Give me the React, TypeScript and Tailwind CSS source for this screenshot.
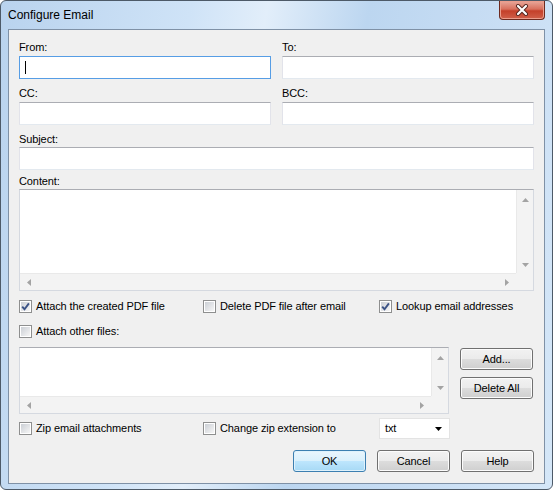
import React from 'react';

const Arrow: React.FC<{ dir: 'up' | 'down' | 'left' | 'right' }> = ({ dir }) => {
  const pts = {
    up: '0,4 3.5,0 7,4',
    down: '0,0 7,0 3.5,4',
    left: '4,0 4,7 0,3.5',
    right: '0,0 0,7 4,3.5',
  }[dir];
  const w = dir === 'up' || dir === 'down' ? 7 : 4;
  const h = dir === 'up' || dir === 'down' ? 4 : 7;
  return (
    <svg width={w} height={h} viewBox={`0 0 ${w} ${h}`}>
      <polygon points={pts} fill="#a3a3a3" />
    </svg>
  );
};

const ScrollBox: React.FC<{ className: string }> = ({ className }) => (
  <div
    className={`grid grid-cols-[1fr_17px] grid-rows-[1fr_17px] border border-[#d5d9e0] border-t-[#abadb3] bg-white ${className}`}
  >
    <div className="bg-white" />
    <div className="flex flex-col items-center justify-between border-l border-[#e9e9e9] bg-[#f3f3f3] pt-[8px] pb-[6px]">
      <Arrow dir="up" />
      <Arrow dir="down" />
    </div>
    <div className="flex items-center justify-between border-t border-[#e9e9e9] bg-[#f3f3f3] px-[7px]">
      <Arrow dir="left" />
      <Arrow dir="right" />
    </div>
    <div className="bg-[#f3f3f3]" />
  </div>
);

const Field: React.FC<{ label: string; focused?: boolean; className?: string }> = ({ label, focused, className }) => (
  <div className={className}>
    <div className="h-[13px] leading-[13px]">{label}</div>
    <div
      className={
        focused
          ? 'mt-[2px] flex h-[23px] items-center border border-[#569de5] bg-white pl-[5px]'
          : 'mt-[2px] h-[23px] border border-[#e2e3ea] border-t-[#abadb3] border-b-[#e3e9ef] bg-white'
      }
    >
      {focused && <span className="h-[13px] w-px bg-black" />}
    </div>
  </div>
);

const Checkbox: React.FC<{ checked?: boolean; label: string }> = ({ checked, label }) => (
  <div className="flex h-[13px] items-center gap-[4px] leading-[13px]">
    <span className="flex h-[13px] w-[13px] shrink-0 items-center justify-center border border-[#8e8f8f] bg-white">
      <span className="relative flex h-[9px] w-[9px] items-center justify-center bg-[linear-gradient(135deg,#cbcfd5,#f6f6f6)]">
        {checked && (
          <svg width="9" height="9" viewBox="0 0 9 9" className="absolute">
            <path d="M1.2 4.6 L3.5 7.2 L7.9 1.4" fill="none" stroke="#3b5386" strokeWidth="1.9" />
          </svg>
        )}
      </span>
    </span>
    <span>{label}</span>
  </div>
);

const Button: React.FC<{ label: string; primary?: boolean }> = ({ label, primary }) => (
  <div
    className={
      primary
        ? 'flex h-[22px] w-[73px] items-center justify-center rounded-[3px] border border-[#3c7fb1] bg-[linear-gradient(to_bottom,#eaf6fd_0%,#d9f0fc_50%,#bee6fd_50%,#a7d9f5_100%)] shadow-[inset_0_0_0_1px_#dff2fc]'
        : 'flex h-[22px] w-[73px] items-center justify-center rounded-[3px] border border-[#707070] bg-[linear-gradient(to_bottom,#f2f2f2_0%,#ebebeb_50%,#dddddd_50%,#cfcfcf_100%)] shadow-[inset_0_0_0_1px_#fcfcfc]'
    }
  >
    {label}
  </div>
);

export default function App() {
  return (
    <div className="flex h-[490px] w-[553px] flex-col rounded-[6px] border border-[#4d5a68] bg-[linear-gradient(100deg,#b9d3ee_0%,#cfe3f7_30%,#e2eefa_42%,#bcd6f0_58%,#c9def4_80%,#d5e7f8_100%)] font-['Liberation_Sans',Arial,sans-serif] text-[11px] tracking-[-0.1px] text-black">
      <div className="flex h-[28px] shrink-0 items-start justify-between">
        <div className="pl-[7px] pt-[7px] text-[12px] leading-[15px] tracking-normal">Configure Email</div>
        <div className="mr-[7px] flex h-[19px] w-[46px] items-center justify-center rounded-b-[4px] border border-t-0 border-[#6d2a1f] bg-[linear-gradient(to_bottom,#e9a99c_0%,#d8705d_45%,#c4402a_55%,#d0604a_100%)] shadow-[inset_0_0_0_1px_#eb9d8c]">
          <svg width="14" height="12" viewBox="0 0 14 12">
            <path d="M3 2 L11 10 M11 2 L3 10" stroke="#55261f" strokeWidth="4" strokeLinecap="round" />
            <path d="M3 2 L11 10 M11 2 L3 10" stroke="#ffffff" strokeWidth="2.2" strokeLinecap="round" />
          </svg>
        </div>
      </div>

      <div className="mx-[7px] mb-[5px] flex flex-1 flex-col border border-[#7f91a6] bg-[#f0f0f0] px-[10px]">
        <div className="mt-[11px] grid grid-cols-2 gap-x-[11px]">
          <Field label="From:" focused />
          <Field label="To:" />
          <Field label="CC:" className="mt-[8px]" />
          <Field label="BCC:" className="mt-[8px]" />
        </div>

        <div className="mt-[8px] h-[13px] leading-[13px]">Subject:</div>
        <div className="mt-px h-[23px] border border-[#e2e3ea] border-t-[#abadb3] border-b-[#e3e9ef] bg-white" />

        <div className="mt-[5px] h-[13px] leading-[13px]">Content:</div>
        <ScrollBox className="mt-px h-[102px]" />

        <div className="mt-[9px] grid grid-cols-[184px_176px_1fr]">
          <Checkbox checked label="Attach the created PDF file" />
          <Checkbox label="Delete PDF file after email" />
          <Checkbox checked label="Lookup email addresses" />
        </div>

        <div className="mt-[12px]">
          <Checkbox label="Attach other files:" />
        </div>

        <div className="mt-[9px] flex gap-[11px]">
          <ScrollBox className="h-[67px] w-[430px]" />
          <div className="mt-px flex flex-col gap-[7px]">
            <Button label="Add..." />
            <Button label="Delete All" />
          </div>
        </div>

        <div className="mt-[4px] grid h-[21px] grid-cols-[184px_176px_1fr] items-center">
          <Checkbox label="Zip email attachments" />
          <Checkbox label="Change zip extension to" />
          <div className="flex h-[21px] w-[71px] items-center justify-between border border-[#e3e3e3] bg-white pl-[5px] pr-[7px]">
            <span>txt</span>
            <svg width="7" height="4" viewBox="0 0 7 4">
              <polygon points="0,0 7,0 3.5,4" fill="#000000" />
            </svg>
          </div>
        </div>

        <div className="mt-[11px] flex justify-end gap-[11px]">
          <Button label="OK" primary />
          <Button label="Cancel" />
          <Button label="Help" />
        </div>
      </div>
    </div>
  );
}
